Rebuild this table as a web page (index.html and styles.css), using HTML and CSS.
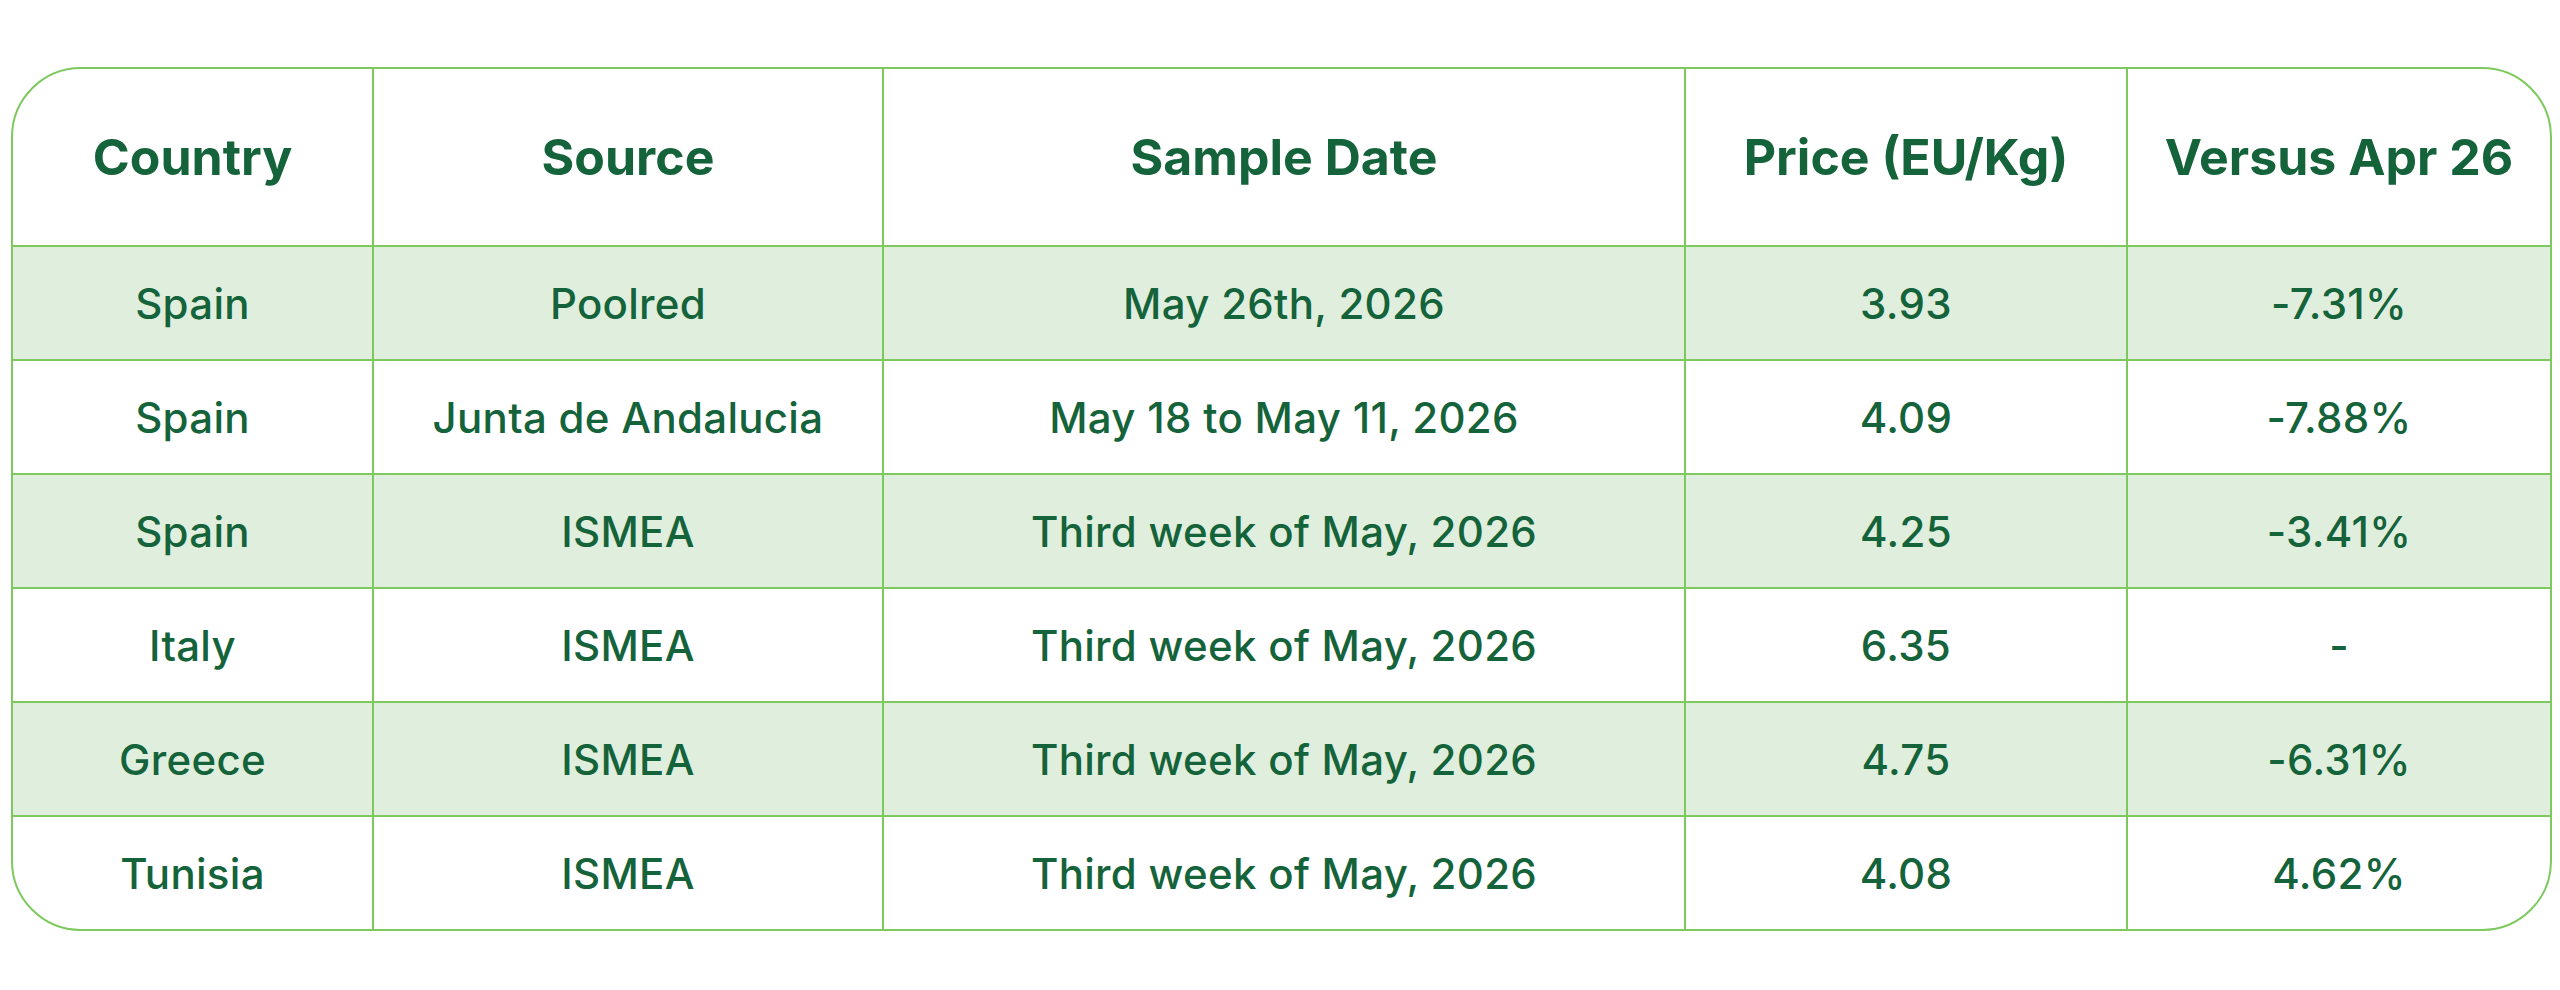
FILE: index.html
```html
<!DOCTYPE html>
<html>
<head>
<meta charset="utf-8">
<link rel="stylesheet" href="styles.css">
</head>
<body>
<div class="page">
  <div class="card">
    <table class="prices">
      <colgroup>
        <col class="c1"><col class="c2"><col class="c3"><col class="c4"><col class="c5">
      </colgroup>
      <thead>
        <tr><th>Country</th><th>Source</th><th>Sample Date</th><th>Price (EU/Kg)</th><th>Versus Apr 26</th></tr>
      </thead>
      <tbody>
        <tr class="alt"><td>Spain</td><td>Poolred</td><td>May 26th, 2026</td><td>3.93</td><td>-7.31%</td></tr>
        <tr><td>Spain</td><td>Junta de Andalucia</td><td>May 18 to May 11, 2026</td><td>4.09</td><td>-7.88%</td></tr>
        <tr class="alt"><td>Spain</td><td>ISMEA</td><td>Third week of May, 2026</td><td>4.25</td><td>-3.41%</td></tr>
        <tr><td>Italy</td><td>ISMEA</td><td>Third week of May, 2026</td><td>6.35</td><td>-</td></tr>
        <tr class="alt"><td>Greece</td><td>ISMEA</td><td>Third week of May, 2026</td><td>4.75</td><td>-6.31%</td></tr>
        <tr><td>Tunisia</td><td>ISMEA</td><td>Third week of May, 2026</td><td>4.08</td><td>4.62%</td></tr>
      </tbody>
    </table>
  </div>
</div>
</body>
</html>
```

FILE: styles.css
```css
html, body {
  margin: 0;
  padding: 0;
  background: #ffffff;
}
.page {
  padding: 67px 0 0 11px;
}
.card {
  width: 2537px;
  border: 2px solid #7dc95e;
  border-radius: 70px;
  overflow: hidden;
  background: #ffffff;
}
.prices {
  width: 100%;
  border-collapse: collapse;
  table-layout: fixed;
  font-family: "Inter", "Liberation Sans", sans-serif;
  color: #14633a;
  text-align: center;
}
.c1 { width: 360px; }
.c2 { width: 510px; }
.c3 { width: 802px; }
.c4 { width: 442px; }
.c5 { width: auto; }
.prices th, .prices td {
  border: 2px solid #7dc95e;
  padding: 0;
}
.prices tr > :first-child { border-left: none; }
.prices tr > :last-child { border-right: none; }
.prices thead th { border-top: none; }
.prices tbody tr:last-child td { border-bottom: none; }
.prices th {
  height: 176px;
  font-size: 50px;
  font-weight: 700;
}
.prices td {
  height: 112px;
  font-size: 42px;
  font-weight: 500;
  letter-spacing: 0.3px;
}
.prices tr.alt td {
  background: #e0efdd;
}
```
